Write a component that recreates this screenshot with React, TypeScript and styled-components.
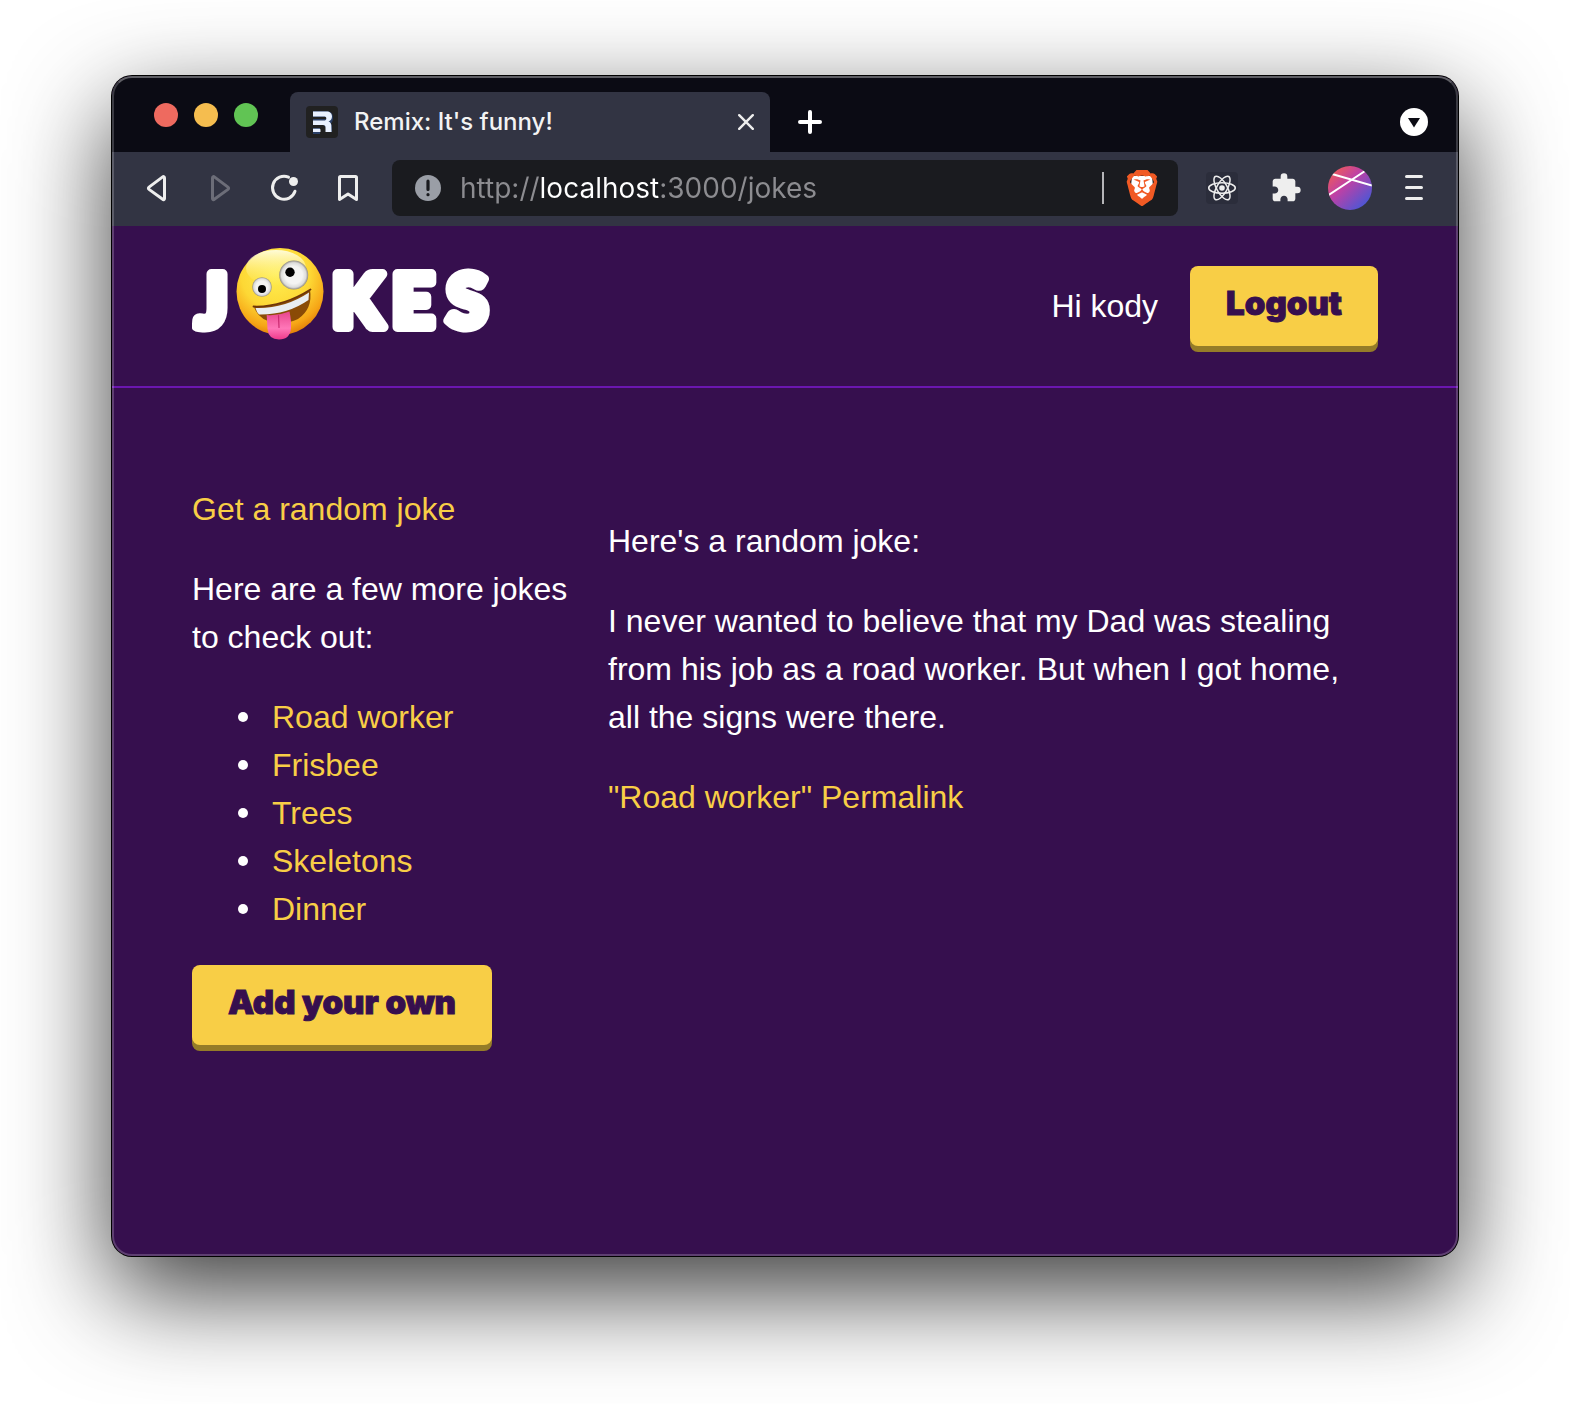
import React from "react";
import styled, { createGlobalStyle } from "styled-components";
import { MdExtension } from "react-icons/md";
import { SiBrave } from "react-icons/si";

const color = {
  page: "#360f4e",
  rule: "#6b16b0",
  yellow: "#f8ce46",
  yellowDark: "#957c28",
  strip: "#0b0b14",
  toolbar: "#323443",
  field: "#1a1b1f",
  icon: "#eeeeee",
};

const GlobalStyle = createGlobalStyle`
  *, *::before, *::after { box-sizing: border-box; }
  body { margin: 0; background: #fff; }
  button { border: 0; padding: 0; background: none; font: inherit; cursor: pointer; }
`;

const Desktop = styled.div`
  display: flex;
  min-height: 100vh;
  padding: 76px 112px 148px;
  overflow: hidden;
`;

const BrowserWindow = styled.div`
  position: relative;
  display: flex;
  flex-direction: column;
  flex: 1;
  min-width: 0;
  border-radius: 20px;
  background: ${color.page};
  box-shadow: 0 0 0 1px #000, 0 36px 100px rgba(0, 0, 0, 0.78);

  &::after {
    content: "";
    position: absolute;
    inset: 0;
    border: 2px solid rgba(255, 255, 255, 0.2);
    border-top-color: rgba(255, 255, 255, 0.34);
    border-radius: 20px;
    pointer-events: none;
  }
`;

const TabStrip = styled.div`
  display: flex;
  align-items: center;
  height: 76px;
  padding: 0 30px 0 42px;
  border-radius: 20px 20px 0 0;
  background: ${color.strip};
`;

const Lights = styled.div`
  display: flex;
  gap: 16px;
  margin: 2px 32px 0 0;
`;

const Light = styled.button<{ $fill: string }>`
  width: 24px;
  height: 24px;
  border-radius: 50%;
  background: ${(p) => p.$fill};
`;

const Tab = styled.div`
  display: flex;
  align-items: center;
  align-self: flex-end;
  flex: 0 1 480px;
  height: 60px;
  padding: 0 16px;
  border-radius: 8px 8px 0 0;
  background: ${color.toolbar};
`;

const TabTitle = styled.span`
  flex: 1;
  margin-left: 16px;
  color: #f3f3f3;
  font: 500 24px/32px Inter, sans-serif;
  white-space: nowrap;
`;

const IconButton = styled.button<{ $size?: number }>`
  display: flex;
  flex: none;
  align-items: center;
  justify-content: center;
  width: ${(p) => p.$size ?? 32}px;
  height: ${(p) => p.$size ?? 32}px;
  color: ${color.icon};
`;

const NewTab = styled(IconButton)`
  margin: 16px auto 0 24px;
`;

const TabSearch = styled(IconButton)`
  margin-top: 16px;
`;

const Toolbar = styled.div`
  display: flex;
  align-items: center;
  height: 74px;
  padding: 0 28px 2px;
  background: ${color.toolbar};
`;

const IconGroup = styled.div`
  display: flex;
  align-items: center;
  gap: 32px;
`;

const AddressBar = styled.div`
  display: flex;
  align-items: center;
  flex: 1;
  min-width: 0;
  height: 56px;
  margin: 0 28px;
  padding: 0 20px;
  border-radius: 8px;
  background: ${color.field};
`;

const Address = styled.input`
  flex: 1;
  min-width: 0;
  height: 40px;
  margin: 0 16px;
  padding: 0;
  border: 0;
  outline: 0;
  color: #fff;
  font: 400 28px/40px Inter, sans-serif;
  background: linear-gradient(to right, #8c8c90 0 79px, #fff 79px 199px, #8c8c90 199px);
  background-clip: text;
  -webkit-text-fill-color: transparent;
`;

const Divider = styled.span`
  width: 2px;
  height: 32px;
  margin-right: 22px;
  background: #b5b5b8;
`;

const Extension = styled(IconButton)`
  border-radius: 4px;
  background: #2b2d3b;
`;

const Page = styled.div`
  flex: 1;
  color: #fff;
  font: 400 32px/48px "Liberation Sans", Arial, sans-serif;
`;

const Header = styled.header`
  display: flex;
  align-items: center;
  justify-content: space-between;
  height: 162px;
  padding: 0 80px;
  border-bottom: 2px solid ${color.rule};
`;

const Title = styled.h1`
  display: flex;
  margin: 0;
`;

const LogoLetters = styled.text`
  fill: #fff;
  stroke: #fff;
  stroke-width: 10px;
  stroke-linejoin: round;
  font: 900 73px Lato, sans-serif;
`;

const User = styled.div`
  display: flex;
  align-items: center;
  gap: 32px;
`;

const Button = styled.button`
  display: inline-block;
  padding: 17px 36px 23px;
  border-radius: 8px;
  background: ${color.yellow};
  box-shadow: 0 6px 0 ${color.yellowDark};
  color: ${color.page};
  font: 900 33px/40px Inter, sans-serif;
  -webkit-text-stroke: 1px ${color.page};
  text-decoration: none;
`;

const Main = styled.main`
  display: flex;
  gap: 32px;
  padding: 97px 80px;
`;

const Sidebar = styled.nav`
  flex: 0 0 384px;

  p { margin: 32px 0; }
`;

const Joke = styled.section`
  flex: 1;
  min-width: 0;

  p { margin: 32px 0; }
`;

const Link = styled.a`
  color: ${color.yellow};
  text-decoration: none;
`;

const JokeList = styled.ul`
  margin: 32px 0;
  padding-left: 46px;
  list-style: none;

  li {
    display: flex;
    align-items: center;
    gap: 24px;
  }

  li::before {
    content: "";
    width: 10px;
    height: 10px;
    border-radius: 50%;
    background: #fff;
  }
`;

const jokes = ["Road worker", "Frisbee", "Trees", "Skeletons", "Dinner"];

function RemixIcon() {
  return (
    <svg width="32" height="32" viewBox="0 0 32 32" aria-hidden="true">
      <rect width="32" height="32" rx="4" fill="#212121" />
      <g fill="none" stroke="#3a6fd0" strokeWidth="6" opacity="0.4">
        <path d="M7 8h13q4 0 4 4t-4 4H7M18 17q5 0 5 5v4M7 25h7" />
      </g>
      <path
        fill="#e9f1ff"
        d="M7 5.500h13.500c3.500 0 5.500 2 5.500 5 0 2.600-1.500 4.300-3.500 4.900 1.800.6 2.700 1.800 2.800 3.900l.2 6.700H19.500v-4.500c0-1.800-.8-2.500-2.500-2.500H7v-4.500h11c1.500 0 2.300-.6 2.300-2s-.8-2-2.300-2H7zM7 22.800h6c1 0 1.500.5 1.500 1.300V26H7z"
      />
    </svg>
  );
}

function TriangleIcon({ flip, fill }: { flip?: boolean; fill: string }) {
  return (
    <svg width="32" height="32" viewBox="0 0 32 32" aria-hidden="true">
      <path
        d="M24.500 6v20.500c0 1-1 1.500-1.800.8L9 17.400c-.8-.6-.8-1.700 0-2.300L22.700 4.900c.8-.6 1.800 0 1.800 1.100z"
        transform={flip ? "matrix(-1 0 0 1 33 0)" : undefined}
        fill="none"
        stroke={fill}
        strokeWidth="3"
        strokeLinejoin="round"
      />
    </svg>
  );
}

function ReloadIcon() {
  return (
    <svg width="32" height="32" viewBox="0 0 32 32" aria-hidden="true">
      <path d="M20.500 5.200A11.500 11.500 0 1 0 27 19.300" fill="none" stroke="currentColor" strokeWidth="3" strokeLinecap="round" />
      <circle cx="25.500" cy="9.500" r="4.500" fill="currentColor" />
    </svg>
  );
}

function BookmarkIcon() {
  return (
    <svg width="32" height="32" viewBox="0 0 32 32" aria-hidden="true">
      <path d="M7.500 5.500q0-1 1-1h15q1 0 1 1V27.500L16 22 7.500 27.500z" fill="none" stroke="currentColor" strokeWidth="3" strokeLinejoin="round" />
    </svg>
  );
}

function InfoIcon() {
  return (
    <svg width="32" height="32" viewBox="0 0 32 32" aria-hidden="true">
      <circle cx="16" cy="16" r="13" fill="#9a9ea6" />
      <path d="M16 9.200v8.300M16 22.500v.2" stroke={color.field} strokeWidth="3.200" strokeLinecap="round" />
    </svg>
  );
}

function BraveIcon() {
  return (
    <svg width="36" height="36" viewBox="0 0 36 36" style={{ flex: "none" }} aria-hidden="true">
      <path d="M8 6h20l1 10-5 12-6 3-6-3-5-12z" fill="#fff" />
      <SiBrave size={36} color="#f15a24" />
    </svg>
  );
}

function AtomIcon() {
  return (
    <svg width="32" height="32" viewBox="0 0 32 32" aria-hidden="true">
      <g fill="none" stroke="currentColor" strokeWidth="1.500">
        <ellipse cx="16" cy="16" rx="13.300" ry="5.200" />
        <ellipse cx="16" cy="16" rx="13.300" ry="5.200" transform="rotate(60 16 16)" />
        <ellipse cx="16" cy="16" rx="13.300" ry="5.200" transform="rotate(120 16 16)" />
      </g>
      <circle cx="16" cy="16" r="2.800" fill="currentColor" />
    </svg>
  );
}

function AvatarIcon() {
  return (
    <svg width="44" height="44" viewBox="0 0 44 44" style={{ flex: "none" }} aria-hidden="true">
      <defs>
        <linearGradient id="avatar" x1="0.100" y1="0.100" x2="0.850" y2="0.900">
          <stop offset="0" stopColor="#ee5a5a" />
          <stop offset="0.400" stopColor="#bf40a5" />
          <stop offset="1" stopColor="#4a57d6" />
        </linearGradient>
        <clipPath id="avatarClip">
          <circle cx="22" cy="22" r="22" />
        </clipPath>
      </defs>
      <g clipPath="url(#avatarClip)">
        <rect width="44" height="44" fill="url(#avatar)" />
        <path d="M0 29.500L37 5M4 8l40 11.500" stroke="#fff" strokeWidth="2" />
      </g>
    </svg>
  );
}

function MenuIcon() {
  return (
    <svg width="32" height="32" viewBox="0 0 32 32" aria-hidden="true">
      <path d="M8.500 4.500h15M8.500 15.500h15M8.500 26.500h15" stroke="currentColor" strokeWidth="3" strokeLinecap="round" />
    </svg>
  );
}

function Logo() {
  return (
    <svg width="300" height="120" viewBox="0 0 300 120" role="img" aria-label="J🤪KES">
      <defs>
        <radialGradient id="face" cx="0.450" cy="0.300" r="0.720">
          <stop offset="0" stopColor="#ffee52" />
          <stop offset="0.550" stopColor="#fdd835" />
          <stop offset="0.850" stopColor="#f6a516" />
          <stop offset="1" stopColor="#e07c08" />
        </radialGradient>
        <linearGradient id="shine" x1="0" y1="0" x2="0" y2="1">
          <stop offset="0" stopColor="#fffde0" stopOpacity="0.950" />
          <stop offset="1" stopColor="#fff27a" stopOpacity="0" />
        </linearGradient>
        <radialGradient id="eye">
          <stop offset="0.600" stopColor="#f4f4f2" />
          <stop offset="0.850" stopColor="#dcdcda" />
          <stop offset="1" stopColor="#8f8a80" />
        </radialGradient>
        <linearGradient id="tongue" x1="0" y1="0" x2="0" y2="1">
          <stop offset="0" stopColor="#e8458d" />
          <stop offset="0.600" stopColor="#ff77b8" />
          <stop offset="1" stopColor="#f0398b" />
        </linearGradient>
      </defs>
      <LogoLetters x="4" y="81">J</LogoLetters>
      <LogoLetters x="140 200 255" y="81">KES</LogoLetters>
      <circle cx="88" cy="45.500" r="43.500" fill="url(#face)" />
      <ellipse cx="84" cy="22" rx="30" ry="18" fill="url(#shine)" />
      <circle cx="101.700" cy="29" r="14.500" fill="url(#eye)" />
      <circle cx="70" cy="41" r="9.800" fill="url(#eye)" />
      <circle cx="98" cy="26.300" r="4.700" fill="#000" />
      <circle cx="70" cy="43" r="4" fill="#000" />
      <path d="M62 60.500Q91 62 118 43.500Q121 63 106 73Q92 80 76 75Q65 71 62 60.500z" fill="#8a4b06" />
      <path d="M63.500 62Q92 63 117 46.500L116.500 54Q95 69 67 68.500Q64.500 66 63.500 62z" fill="#e9edf0" />
      <path d="M61.500 60.500Q90 61.500 118.500 43.500" fill="none" stroke="#6e3508" strokeWidth="1.800" strokeLinecap="round" />
      <path d="M74.700 69Q86 70 97.500 65.500Q99.500 75 99 82Q98 93.500 87 93.500Q76.500 93.500 75.500 83z" fill="url(#tongue)" />
      <path d="M86.500 69.500l.5 12" stroke="#c92a70" strokeWidth="1.200" strokeLinecap="round" />
    </svg>
  );
}

export default function App() {
  return (
    <Desktop>
      <GlobalStyle />
      <BrowserWindow>
        <TabStrip>
          <Lights>
            <Light $fill="#ee6a5f" aria-label="Close window" />
            <Light $fill="#f5bd4f" aria-label="Minimise window" />
            <Light $fill="#61c454" aria-label="Zoom window" />
          </Lights>
          <Tab>
            <RemixIcon />
            <TabTitle>Remix: It's funny!</TabTitle>
            <IconButton $size={16} aria-label="Close tab">
              <svg width="16" height="16" viewBox="0 0 16 16" aria-hidden="true">
                <path d="M1.200 1.200l13.600 13.600M14.800 1.200L1.200 14.800" stroke="currentColor" strokeWidth="2.400" strokeLinecap="round" />
              </svg>
            </IconButton>
          </Tab>
          <NewTab aria-label="New tab">
            <svg width="32" height="32" viewBox="0 0 32 32" aria-hidden="true">
              <path d="M16 6v20M6 16h20" stroke="#fff" strokeWidth="4" strokeLinecap="round" />
            </svg>
          </NewTab>
          <TabSearch $size={28} aria-label="Search tabs">
            <svg width="28" height="28" viewBox="0 0 28 28" aria-hidden="true">
              <circle cx="14" cy="14" r="14" fill="#fff" />
              <path d="M8 10h12l-6 9.500z" fill={color.strip} />
            </svg>
          </TabSearch>
        </TabStrip>

        <Toolbar>
          <IconGroup>
            <IconButton aria-label="Back"><TriangleIcon fill="#eeeeee" /></IconButton>
            <IconButton aria-label="Forward"><TriangleIcon flip fill="#6c6d78" /></IconButton>
            <IconButton aria-label="Reload"><ReloadIcon /></IconButton>
            <IconButton aria-label="Bookmark"><BookmarkIcon /></IconButton>
          </IconGroup>
          <AddressBar>
            <InfoIcon />
            <Address type="text" aria-label="Address" defaultValue="http://localhost:3000/jokes" spellCheck={false} />
            <Divider />
            <IconButton aria-label="Brave Shields"><BraveIcon /></IconButton>
          </AddressBar>
          <IconGroup>
            <Extension aria-label="React Developer Tools"><AtomIcon /></Extension>
            <IconButton aria-label="Extensions"><MdExtension size={34} /></IconButton>
            <IconButton aria-label="Profile"><AvatarIcon /></IconButton>
            <IconButton aria-label="Menu"><MenuIcon /></IconButton>
          </IconGroup>
        </Toolbar>

        <Page>
          <Header>
            <Title><Logo /></Title>
            <User>
              <span>Hi kody</span>
              <Button type="button">Logout</Button>
            </User>
          </Header>
          <Main>
            <Sidebar>
              <Link href="#random">Get a random joke</Link>
              <p>Here are a few more jokes to check out:</p>
              <JokeList>
                {jokes.map((joke) => (
                  <li key={joke}>
                    <Link href={`#${joke}`}>{joke}</Link>
                  </li>
                ))}
              </JokeList>
              <Button as="a" href="#new">Add your own</Button>
            </Sidebar>
            <Joke>
              <p>Here's a random joke:</p>
              <p>
                I never wanted to believe that my Dad was stealing from his job as a road worker. But when I
                got home, all the signs were there.
              </p>
              <Link href="#permalink">"Road worker" Permalink</Link>
            </Joke>
          </Main>
        </Page>
      </BrowserWindow>
    </Desktop>
  );
}
